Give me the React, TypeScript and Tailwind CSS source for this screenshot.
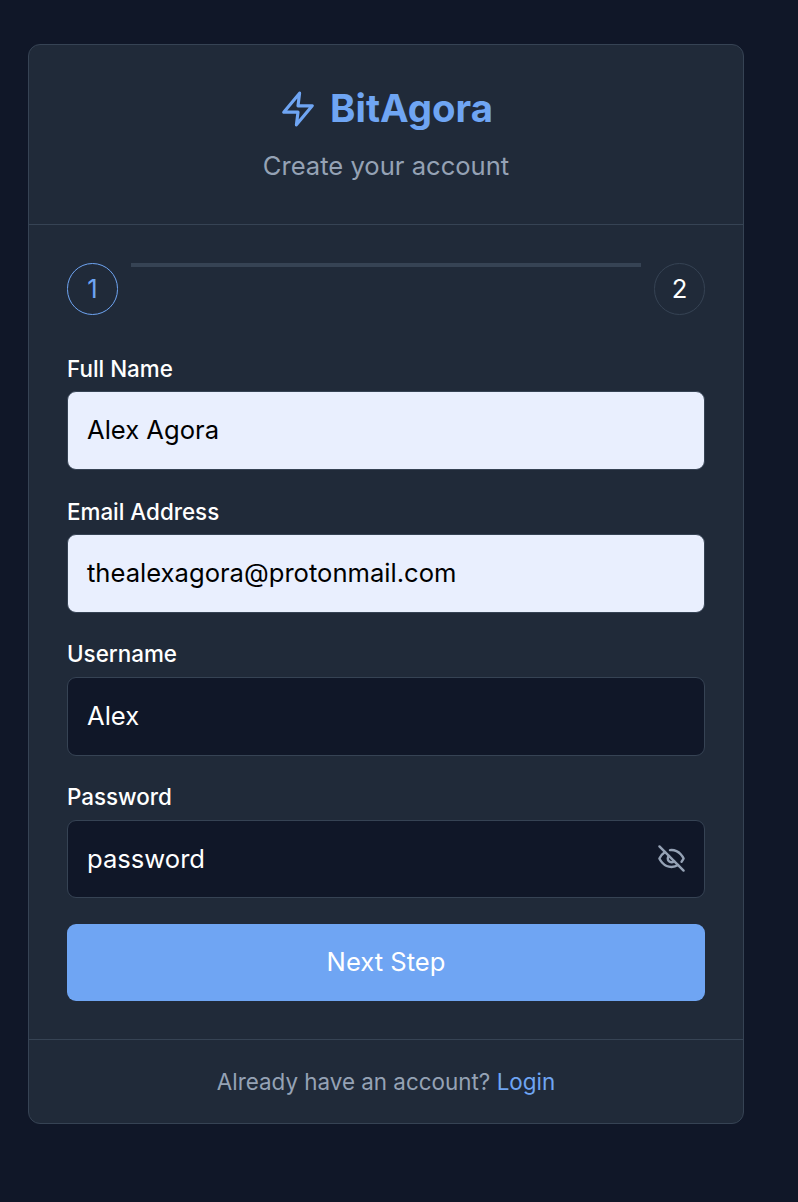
import React from "react";

type FieldProps = {
  label: string;
  value: string;
  labelClass: string;
  boxClass: string;
  children?: React.ReactNode;
};

const LIGHT = "bg-[#e9effe] text-black";
const DARK = "bg-[#101728] text-white";

function Field({ label, value, labelClass, boxClass, children }: FieldProps) {
  return (
    <div className="flex flex-col">
      <label className={`h-[36px] text-[22.4px] font-medium text-white ${labelClass}`}>{label}</label>
      <div className={`flex items-center justify-between rounded-[9px] border border-[#364354] pr-[18px] pl-[19px] text-[25.6px] ${boxClass}`}>
        <span>{value}</span>
        {children}
      </div>
    </div>
  );
}

export default function App() {
  return (
    <main className="h-[1202px] w-[798px] bg-[#101728] pt-[44px] pl-[28px] font-['Inter',sans-serif] antialiased">
      <section className="flex h-[1080px] w-[716px] flex-col rounded-xl border border-[#364354] bg-[#202a39]">
        <header className="flex h-[180px] flex-col items-center border-b border-[#364354] pt-[38px]">
          <div className="flex h-[52px] items-center gap-[13px] text-[#6fa5f3]">
            <svg width="38" height="38" viewBox="0 0 24 24" fill="none" stroke="currentColor" strokeWidth="2" strokeLinecap="round" strokeLinejoin="round">
              <path d="M13 2 3 14h9l-1 8 10-12h-9l1-8z" />
            </svg>
            <h1 className="-mt-[2px] text-[38.4px] leading-[52px] font-bold">BitAgora</h1>
          </div>
          <p className="mt-[11px] text-[25.6px] leading-[40px] text-[#95a2b5]">Create your account</p>
        </header>
        <div className="flex h-[814px] flex-col px-[38px] pt-[38px]">
          <div className="flex h-[52px] justify-between">
            <div className="flex h-[52px] w-[51px] items-center justify-center rounded-full border border-[#6fa5f3] text-[25.6px] text-[#6fa5f3]">1</div>
            <div className="h-1 w-[510px] bg-[#364354]" />
            <div className="flex h-[52px] w-[51px] items-center justify-center rounded-full border border-[#364354] text-[25.6px] text-white">2</div>
          </div>
          <form className="mt-[40px] flex flex-col gap-[28px]">
            <Field label="Full Name" value="Alex Agora" labelClass="leading-[28px]" boxClass={`h-[79px] pb-px ${LIGHT}`} />
            <Field label="Email Address" value="thealexagora@protonmail.com" labelClass="leading-[28px]" boxClass={`h-[79px] pb-px ${LIGHT}`} />
            <Field label="Username" value="Alex" labelClass="leading-[26px]" boxClass={`h-[79px] pb-px ${DARK}`} />
            <Field label="Password" value="password" labelClass="leading-[26px]" boxClass={`h-[78px] ${DARK}`}>
              <svg className="-mt-px" width="29" height="29" viewBox="0 0 24 24" fill="none" stroke="#95a2b5" strokeWidth="2" strokeLinecap="round" strokeLinejoin="round">
                <path d="M9.88 9.88a3 3 0 1 0 4.24 4.24" />
                <path d="M10.73 5.08A10.43 10.43 0 0 1 12 5c7 0 10 7 10 7a13.16 13.16 0 0 1-1.67 2.68" />
                <path d="M6.61 6.61A13.526 13.526 0 0 0 2 12s3 7 10 7a9.74 9.74 0 0 0 5.39-1.61" />
                <path d="m2 2 20 20" />
              </svg>
            </Field>
          </form>
          <button className="mt-[26px] h-[77px] rounded-[9px] bg-[#6fa5f3] text-[25.6px] text-white">Next Step</button>
        </div>
        <footer className="flex h-[84px] items-center justify-center gap-[6.5px] border-t border-[#364354] text-[22.4px] text-[#95a2b5]">
          <span>Already have an account?</span>
          <a className="text-[#6fa5f3]">Login</a>
        </footer>
      </section>
    </main>
  );
}
